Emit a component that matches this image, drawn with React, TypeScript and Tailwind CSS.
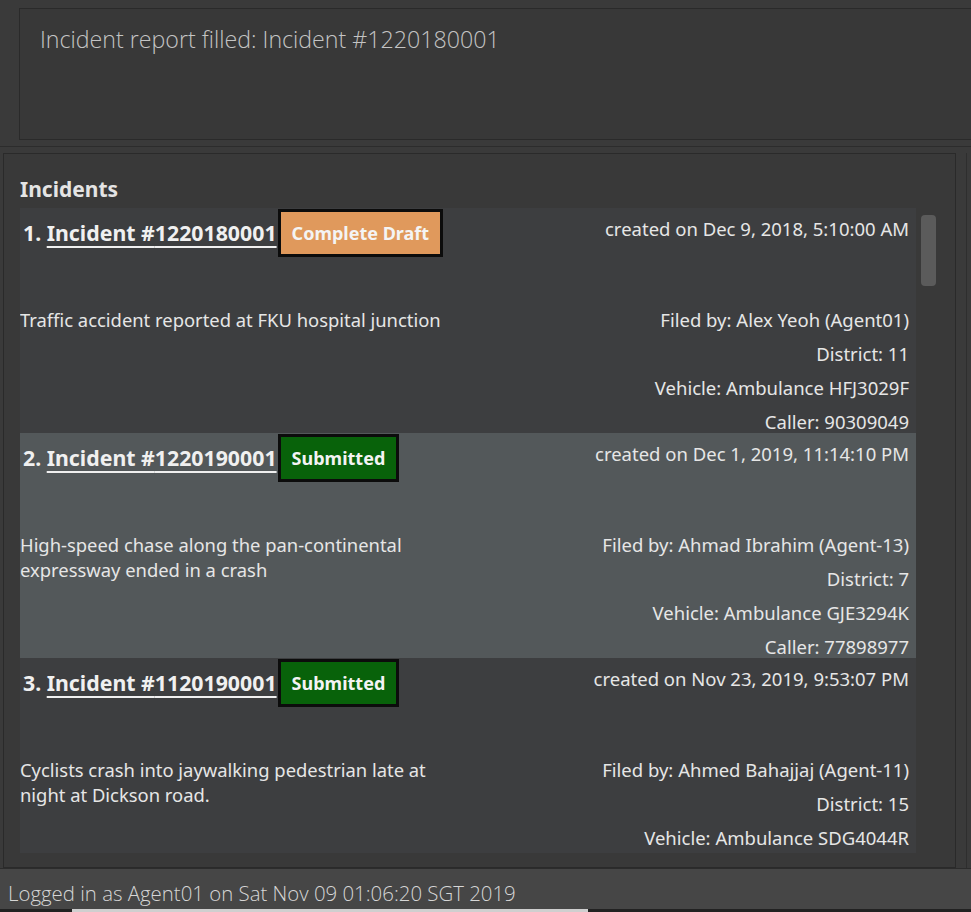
import React from 'react';

type Incident = {
  id: string;
  status: 'draft' | 'submitted';
  created: string;
  desc: string;
  filedBy: string;
  district: string;
  vehicle: string;
  caller?: string;
};

const incidents: Incident[] = [
  {
    id: '1220180001',
    status: 'draft',
    created: 'created on Dec 9, 2018, 5:10:00 AM',
    desc: 'Traffic accident reported at FKU hospital junction',
    filedBy: 'Alex Yeoh (Agent01)',
    district: '11',
    vehicle: 'Ambulance HFJ3029F',
    caller: '90309049',
  },
  {
    id: '1220190001',
    status: 'submitted',
    created: 'created on Dec 1, 2019, 11:14:10 PM',
    desc: 'High-speed chase along the pan-continental expressway ended in a crash',
    filedBy: 'Ahmad Ibrahim (Agent-13)',
    district: '7',
    vehicle: 'Ambulance GJE3294K',
    caller: '77898977',
  },
  {
    // last row is scrolled past the viewport, caller line not visible
    id: '1120190001',
    status: 'submitted',
    created: 'created on Nov 23, 2019, 9:53:07 PM',
    desc: 'Cyclists crash into jaywalking pedestrian late at night at Dickson road.',
    filedBy: 'Ahmed Bahajjaj (Agent-11)',
    district: '15',
    vehicle: 'Ambulance SDG4044R',
  },
];

const IncidentCard = ({ incident, index }: { incident: Incident; index: number }) => {
  const isDraft = incident.status === 'draft';
  return (
    <div
      className={`h-[225px] shrink-0 flex justify-between text-[#e6e6e6] ${
        index % 2 === 1 ? 'bg-[#53585a]' : 'bg-[#3d3e40]'
      }`}
    >
      {/* left side */}
      <div className="flex flex-col">
        <div className="mt-px h-[48px] flex items-center pl-[3px]">
          <span className="text-[21.3px] font-bold leading-none text-[#f0f0f0]">
            {index + 1}. <span className="underline underline-offset-[5px] decoration-[1.5px]">Incident #{incident.id}</span>
          </span>
          <span
            className={`ml-px h-[48px] flex items-center px-[11px] border-[3px] border-[#0c0c0c] text-[18px] font-bold text-[#f4f4f4] ${
              isDraft ? 'bg-[#e0995c]' : 'bg-[#08620a]'
            }`}
          >
            {isDraft ? 'Complete Draft' : 'Submitted'}
          </span>
        </div>
        <p className="mt-[50px] w-[440px] text-[18.4px] leading-[25px]">{incident.desc}</p>
      </div>

      {/* right side */}
      <div className="flex flex-col items-end pr-[7px] pt-[9px] text-[18.5px]">
        <div className="leading-[24px]">{incident.created}</div>
        <div className="mt-[68px] flex flex-col items-end gap-3 leading-[22px]">
          <div>Filed by: {incident.filedBy}</div>
          <div>District: {incident.district}</div>
          <div>Vehicle: {incident.vehicle}</div>
          {incident.caller && <div>Caller: {incident.caller}</div>}
        </div>
      </div>
    </div>
  );
};

export default function App() {
  return (
    <div className="w-[971px] h-[912px] overflow-hidden bg-[#3a3a3a] flex flex-col font-['Noto_Sans','Open_Sans',sans-serif]">
      {/* Result display */}
      <div className="h-[147px] shrink-0 border-b border-[#2c2c2c] pl-[19px] pt-[8px]">
        <div className="h-[132px] border border-[#2a2a2a] border-r-0 bg-[#383838] pl-[20px] pt-[14px]">
          <div className="text-[23.2px] font-light leading-[32px] text-[#c4c4c4] font-['Open_Sans',sans-serif]">
            Incident report filled: Incident #1220180001
          </div>
        </div>
      </div>

      {/* Incident list panel */}
      <div className="mt-[6px] flex-1 min-h-0 flex">
        <div className="ml-[3px] w-[953px] border border-[#2a2a2a] bg-[#393939] flex flex-col">
          <div className="pl-[16px] pt-[22px] h-[54px] text-[21px] font-bold leading-[26px] text-[#e4e4e4]">
            Incidents
          </div>
          <div className="flex-1 min-h-0 flex pl-[16px] pb-[14px]">
            <div className="w-[896px] flex flex-col overflow-hidden">
              {incidents.map((incident, i) => (
                <IncidentCard key={incident.id} incident={incident} index={i} />
              ))}
            </div>
            {/* scrollbar */}
            <div className="ml-[5px] pt-[7px]">
              <div className="w-[15px] h-[71px] rounded-[4px] bg-[#5b5b5b]"></div>
            </div>
          </div>
        </div>
        <div className="ml-[10px] border-l border-[#2e2e2e]"></div>
      </div>

      {/* Status bar */}
      <div className="h-[41px] shrink-0 border-t border-[#2c2c2c] bg-[#464646] pl-[8px] pt-[10px]">
        <div className="text-[20.4px] font-light leading-[28px] text-[#d6d6d6] font-['Open_Sans',sans-serif]">
          Logged in as Agent01 on Sat Nov 09 01:06:20 SGT 2019
        </div>
      </div>
      <div className="h-[3px] shrink-0 bg-[#222222] pl-[72px]">
        <div className="w-[516px] h-full bg-[#cfcfcf]"></div>
      </div>
    </div>
  );
}
